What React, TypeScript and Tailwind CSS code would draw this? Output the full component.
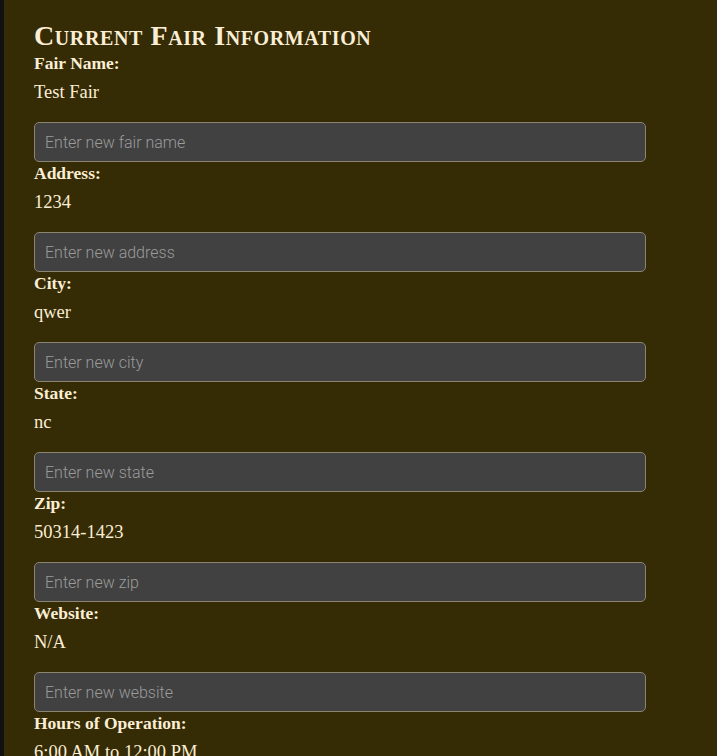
import React from 'react';

const fields = [
  { label: 'Fair Name:', value: 'Test Fair', placeholder: 'Enter new fair name' },
  { label: 'Address:', value: '1234', placeholder: 'Enter new address' },
  { label: 'City:', value: 'qwer', placeholder: 'Enter new city' },
  { label: 'State:', value: 'nc', placeholder: 'Enter new state' },
  { label: 'Zip:', value: '50314-1423', placeholder: 'Enter new zip' },
  { label: 'Website:', value: 'N/A', placeholder: 'Enter new website' },
  { label: 'Hours of Operation:', value: '6:00 AM to 12:00 PM', placeholder: 'Enter new hours' },
];

const App = () => {
  return (
    <div className="flex min-h-screen bg-[#352b04] text-[#fbeed6]" style={{ fontFamily: '"Liberation Serif", serif' }}>
      <div className="w-[4px] shrink-0 bg-[#111]" />
      <div className="flex-1 pl-[30px] pt-[23px] pb-10">
        <h2 className="mb-[3px] text-[28px] leading-[26px] font-bold tracking-[0.6px] [font-variant:small-caps]">
          Current Fair Information
        </h2>
        {fields.map((f) => (
          <div key={f.label} className="w-[612px]">
            <div className="text-[17.5px] leading-[22px] font-bold">{f.label}</div>
            <p className="mt-[6px] mb-[18px] text-[18.5px] leading-[24px]">{f.value}</p>
            <input
              type="text"
              placeholder={f.placeholder}
              className="block h-[40px] w-full rounded-[5px] border border-[#8a8470] bg-[#414141] px-[10px] text-[16px] font-light text-white placeholder:text-[#9b9b9b] outline-none"
              style={{ fontFamily: 'Roboto, sans-serif' }}
            />
          </div>
        ))}
      </div>
    </div>
  );
};

export default App;
